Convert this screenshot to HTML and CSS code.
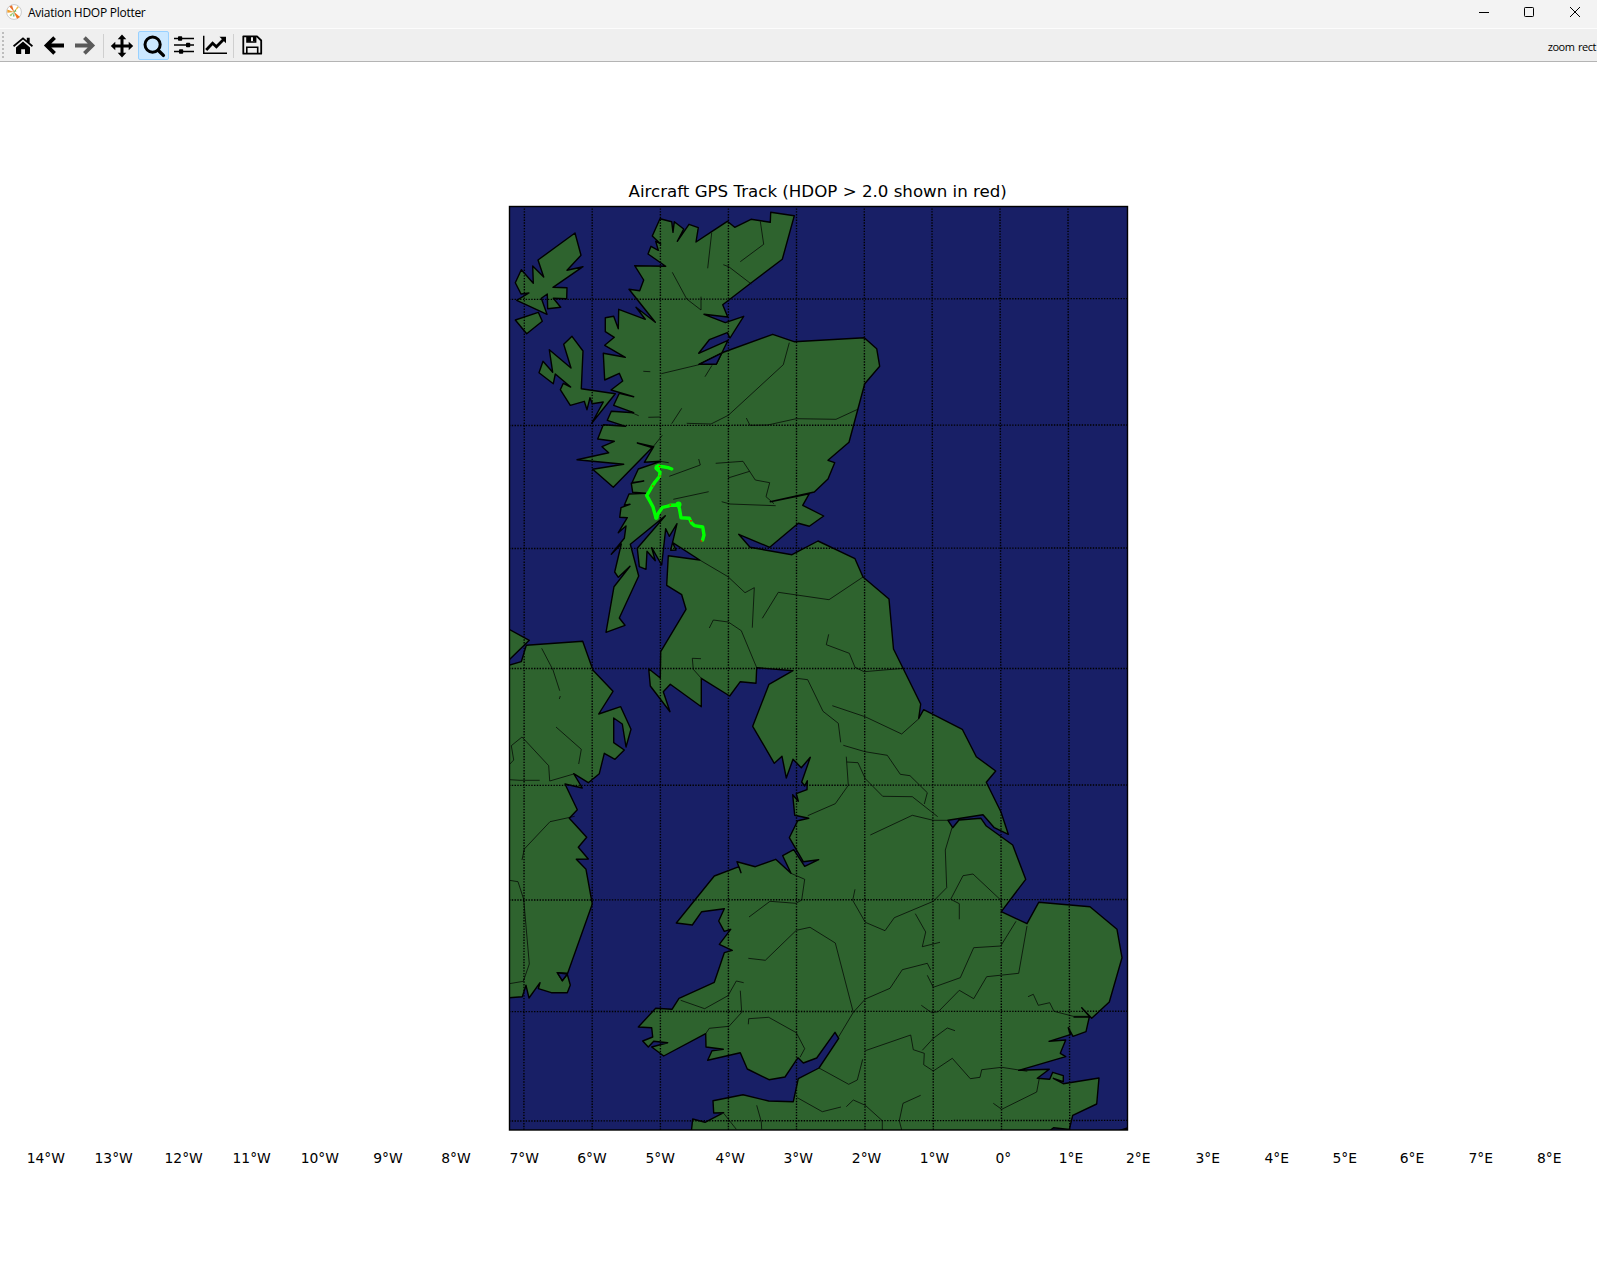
FILE: index.html
```html
<!DOCTYPE html>
<html lang="en">
<head>
<meta charset="utf-8">
<title>Aviation HDOP Plotter</title>
<link rel="stylesheet" href="styles.css">
</head>
<body>
<div class="window">
  <header class="titlebar">
    <svg class="app-icon" viewBox="0 0 16 16"><circle cx="8" cy="8" r="7.4" fill="#fff" stroke="#c4c4c4" stroke-width=".9"/><path d="M8.4 8.4L6 1.2L3.4 2.6Z" fill="#e8702a"/><path d="M8 8L1.2 5.4L1.4 8.8Z" fill="#f0a030"/><path d="M8 8L11.4 2.2L12.8 3.6Z" fill="#edbb4a"/><path d="M7.6 7.6L14 13L11 14.8Z" fill="#f2751c"/><path d="M8 8L3.4 11.1L5 12.6Z" fill="#a3c96b"/><path d="M8 7.4L6.8 12.4L8.6 12.4Z" fill="#6fb98a"/><path d="M7.4 8L9.5 5.4L10.4 7.5Z" fill="#68b04a"/></svg>
    <span class="title">Aviation HDOP Plotter</span>
    <div class="controls">
      <svg viewBox="0 0 12 12"><path d="M1 6.5H11"/></svg>
      <svg viewBox="0 0 12 12"><rect x="1.5" y="1.5" width="9" height="9" rx=".8"/></svg>
      <svg viewBox="0 0 12 12"><path d="M1 1L11 11M11 1L1 11"/></svg>
    </div>
  </header>
  <nav class="toolbar">
    <span class="handle"></span>
    <span class="tool"><svg viewBox="0 0 24 24"><path d="M12 7.6L19 13.4V19.2a.8.8 0 0 1-.8.8H14V15.3H10.2V20H5.8a.8.8 0 0 1-.8-.8V13.4Z"/><path d="M12 3.2L15.8 6.4V3.8H18.7V8.8L22 11.6L20.9 12.9L12 5.6L3.1 12.9L2 11.6L10.8 4.2Q12 3.2 12 3.2Z"/></svg></span>
    <span class="tool"><svg viewBox="0 0 24 24"><path class="arrow" d="M22 11.5H6M12.6 3.6L4.6 11.5L12.6 19.4"/></svg></span>
    <span class="tool disabled"><svg viewBox="0 0 24 24"><path class="arrow" d="M2 11.5H18M11.4 3.6L19.4 11.5L11.4 19.4"/></svg></span>
    <span class="separator"></span>
    <span class="tool shifted"><svg viewBox="0 0 24 24"><path d="M12 0.6L16.3 5.2H13.5V10.5H18.7V7.7L23.2 12L18.7 16.3V13.5H13.5V18.8H16.3L12 23.4L7.7 18.8H10.5V13.5H5.3V16.3L.8 12L5.3 7.7V10.5H10.5V5.2H7.7Z"/></svg></span>
    <span class="tool active"><svg viewBox="0 0 24 24"><circle cx="10.6" cy="10.6" r="7.6" fill="none" stroke="#000" stroke-width="3"/><path d="M16.2 16.2L21.4 21.4" stroke="#000" stroke-width="3.4" stroke-linecap="round"/></svg></span>
    <span class="tool shifted"><svg viewBox="0 0 24 24"><path d="M2 4.5H22M2 11H22M2 17.5H22" stroke="#000" stroke-width="1.6"/><rect x="6" y="2.2" width="4.2" height="4.6" rx=".8"/><rect x="14" y="8.7" width="4.2" height="4.6" rx=".8"/><rect x="7" y="15.2" width="4.2" height="4.6" rx=".8"/></svg></span>
    <span class="tool shifted"><svg viewBox="0 0 24 24"><path d="M.7 1.8V19.3H24" fill="none" stroke="#000" stroke-width="1.5"/><path d="M3.2 16L9.6 9.3L13.4 12.8L20.5 5.6" fill="none" stroke="#000" stroke-width="2.8"/><path d="M16.5 2.8H23V9.3Z"/></svg></span>
    <span class="separator narrow"></span>
    <span class="tool"><svg viewBox="0 0 24 24"><path d="M3.3 2.3H17L21.2 6.5V19.7H3.3Z" fill="none" stroke="#000" stroke-width="1.8" stroke-linejoin="round"/><path d="M7 2V8H15.6V2M6.8 20V13.3H17.7V20" fill="none" stroke="#000" stroke-width="1.6"/><rect x="7" y="2.2" width="4" height="5.6"/><rect x="13" y="2.2" width="2.6" height="5"/></svg></span>
    <span class="mode">zoom rect</span>
  </nav>
  <main class="figure">
    <svg class="plot" viewBox="0 62 1597 1199" width="1597" height="1199">
      <defs><clipPath id="frame"><rect x="509.5" y="206.5" width="618" height="923.5"/></clipPath></defs>
      <text class="plot-title" x="817.7" y="197.3">Aircraft GPS Track (HDOP &gt; 2.0 shown in red)</text>
      <rect class="sea" x="509.5" y="206.5" width="618" height="923.5"/>
      <g clip-path="url(#frame)">
        <g class="land">
          <path d="M660 218.7L671.7 221.7 673 232.3 674.3 221.7 683.7 229 677.3 241.3 689 224.3 698.3 227.7 696 242 711.7 231.7 727.3 221.3 734.7 227.3 751 219.3 770.3 222.3 770.7 212.3 794.3 215.7 782.3 259.3 751.3 282.7 722.7 304.7 727.7 317 704 314.3 725.3 322.7 743.7 316.3 730 338 727.3 332.7 709.3 339.7 698.7 353.3 728 340.3 716.3 364.3 699 364.3 724 352 772.7 334.3 794 341.7 864.3 337.7 876.7 348.7 879.7 366.3 864.7 383.7 849 442.3 828 460.3 834.7 462.7 828 479 814.3 492 770.3 501.7 809.3 493.7 802.7 505.3 823.7 516 809.3 526.3 798.3 523.3 769.7 547.3 738.7 534.3 750 547.3 792 554.7 818 541 855 558.7 863 577 889 599 893.5 649 920.7 704 918.7 718.3 923.7 709.7 962.3 729.3 976.3 756.7 995.7 771 986.3 782.3 1001 812 1008.3 834.3 994.3 827.7 983 814.7 948 820.3 952.7 827.7 959 820 981 818.3 986 825.7 1012.7 845 1025.7 879.3 1001.3 911.7 1027 923.7 1038.7 902.3 1090 906.7 1117 929.3 1122 957.7 1109.3 1002 1091.7 1018.3 1081.7 1007.7 1090 1017 1074 1017 1089.3 1017 1086 1031.7 1073 1036.3 1068.3 1027.7 1070.3 1034.7 1049 1041.3 1065.7 1040 1060.3 1053.3 1065.7 1056.7 1018.7 1070.3 1049.3 1069.3 1037.3 1078.3 1049.7 1079.3 1052.7 1072.3 1063.3 1075.7 1063.3 1081.7 1053.3 1078.3 1063.3 1083.7 1099 1078 1096.7 1104 1072.7 1115.3 1069.3 1129.5 1053.5 1127.8 1048 1132 691.3 1132 692.7 1119 705 1122.3 723.7 1112.7 713.7 1113 713 1100.7 743 1094.7 768.7 1101 793.3 1101.7 798.3 1078.7 819 1068 838.7 1038.3 835 1032.3 816.7 1058 803.3 1063 798 1057.7 785 1077 769 1079.7 747.3 1069 740.3 1052.7 707.7 1060.3 712 1050.7 723.3 1049.3 706 1047 705.7 1033.7 663.7 1056 651.7 1047 667.7 1042.7 653.7 1041.3 648.3 1047 642.7 1041 652.7 1037 651.7 1027.7 638.3 1027 655.7 1008.3 672 1009.3 679 998.3 714.3 982.3 724.3 952.7 732.3 950.3 719.3 944.3 730.7 929.3 724.3 931.3 718.7 921 724.3 908.7 701.7 911.7 692.3 925 676.3 923 714.3 876 739 866.7 741 872.7 737 861.7 755.3 866.7 775.7 859.3 791 873.3 782.7 855.7 793.7 849.7 804.7 866.3 818.7 859.7 803.3 861.7 789.3 837.7 797.7 820.7 808.7 818.3 794.7 815.3 792.7 794.7 798.3 801.3 796.3 793.7 807 789.7 807.3 780.7 804.7 786 801.7 782 810.3 757.3 801.3 767.7 793 759.3 786.3 778 782 756.3 774.3 763.3 752.7 726.3 769 684.3 793 670.7 756.7 667.7 756 683.3 740.3 681.7 729.7 696 701.3 678.3 701.3 706.7 670.3 684.3 663.3 691.7 670 711.7 650.3 686 648.7 668.7 660.3 678 660.7 651.7 686 609.3 681.7 594.7 666.7 585.3 668.3 555.7 699.7 560 672.7 542.7 676 550 670.7 550.3 677 523.7 669.3 536.3 665.7 528.7 661.7 565 651.7 547.7 655.3 560.7 647 551.3 646 569.3 639.3 566.7 637.3 548.3 665.3 515.7 630.3 544.3 638.7 576 619.3 618 625 625.3 606 632.3 614 586.7 630 566.3 618.3 577.3 614.7 572 621.3 544 611.3 554.3 624.3 538.3 626 526 618.3 532.7 627.3 517.7 619.7 517.3 621 507.7 630 504.3 624.3 505.3 629 494 645.7 493.3 632.7 492.3 631.3 483.3 643.7 481 632 482.7 638.3 469 660.7 461.3 644.3 462.3 653.7 446.7 637.3 443 652 447.7 613.3 487.3 592.7 469.3 623.7 464.3 577 459.7 608.7 452.7 602 446.7 614.3 441.3 597.7 439 603.3 424.7 625.7 426.3 607.3 420.3 611.3 411.3 633.7 412.7 613.7 405.3 619.3 393.3 633.7 396.7 611 390 622.7 381 619.3 373.3 604.7 380 603.3 353.3 625.3 357.3 604.7 345.3 614.3 337.3 605.3 331.7 605.3 317.7 613.7 316.3 618.3 328.7 618.7 309.3 645.3 319.3 636 307.3 655.3 322.3 629 289.3 639.7 290.7 643.7 280 634.7 265.7 665.7 266.3 648 254 651 246.3 658.3 250.3 655.7 241.3 660.7 244 652.3 236Z"/>
          <path d="M575 233L581 255.3 567 270.3 583 266.7 553 287.3 567 287.7 566.7 298.7 553.3 298.3 560.7 307.3 547.7 308.7 547.3 294 541.3 298.3 547 314.3 516.7 300.3 529 293 521 294 515.3 282.7 521.3 269.7 533.3 283.3 532.7 266 543.7 277 538 260Z"/>
          <path d="M515.3 320L538.3 312.3 542.3 321.3 526.7 333.7Z"/>
          <path d="M572 336.3L583 351 581.3 388.7 615.3 393.7 591.7 423.3 603.3 402 592.3 403.7 590 397.7 587 409.7 584.3 401.3 570.3 405.3 560.3 389.7 563.3 383.3 570.7 387 555.3 374 553.3 383.7 539 372.7 543 361.3 552.7 372.3 549.3 349.7 571 368 563.7 344.3Z"/>
          <path d="M505 627L529.3 640.3 505 664Z"/>
          <path d="M505 666.5L521.3 661.7 526.3 645.3 582.7 641.3 593 670.3 613 691.3 598.7 714 620.7 706.7 631 729.3 626 747 622.3 724 613.7 718 613.7 742.7 624.3 750 615 759.3 604.3 753.3 599.3 773.7 588.3 782.7 573.7 773.7 582.3 788 565 784 577.3 809.7 569.3 818.3 586.7 837.3 578.3 847.3 588.3 859 576.3 859.3 586 869.3 592.3 904 567.3 974.3 562.3 980.7 557.3 972.7 567 973.3 570.3 985 567.3 992.7 551.3 992.7 538.3 988.7 540 982.7 529 998 526 985.3 522.3 996.7 505 998Z"/>
          <path d="M1118 1131L1127.5 1128V1134H1116Z"/>
          <path class="inlet" d="M721.7 353.2L716.3 364.3H699Z"/>
          <path class="inlet" d="M567.3 974L562.3 980.7 557.3 972.7Z"/>
        </g>
        <path class="rivers" d="M711.7 232.7L707.7 268.3M760.3 221.3L763.7 244.3 740.3 261.7M723.3 264.7L728.7 266.7 751.3 284M672.3 272.3L686.7 299 701 310V296.7M643.3 371.3L650.3 371.7M661.3 373.7L699 364.7M705 376.7L712 365.3M789.3 342.7L783.3 364.7 728.3 415.3 711 424 686.7 423.3M681.7 408.3L671.7 423.7M648.3 417.3L660.7 417M631.7 412.7L638.7 415.7M746.3 418L750 425.3 767.7 425 796.3 418.7 836 419.3 858.3 409M662.3 435.3L653.7 446M660 461.3L668.7 462.7M669.3 476.3L700.3 465 698.7 459M673.3 499.3L708.7 491.7M715.7 463.3L743 461.3 755.3 480 769.7 482.7 766 496.7 774 503.7M728 478L749.7 471.3M721.7 501.7L730 504 775.7 505.7M699.7 560L728 576.7 745 592.7 754.3 587.7 752.3 627.7M762.3 618.3L778.3 592.3 829 599.7 863 577M709.3 628L713.3 620 728.3 622 741.3 630.7 756.7 667.7M828.7 634.3L826.3 644.7 849.3 653.3 855 667.3 864 671.7 904 668.3M701 658.7L692.3 658.3 693.3 669.3 701.3 678.3M541.7 648.3L553 670 559.7 690.7M560.3 696L559.3 699M556 727L581.3 749.3 578.7 764M509.3 764.7L513.7 760 511.3 745.7 522 737 548.7 765.7 549.7 781 573.7 774M509.3 779.7L520 780.3H539.7M574.7 816.3L550 821.7 524.3 849 522 860M509.3 880.3L518 881.7 523.7 899.3 529.3 964 523.3 981.3 509.3 983.7M796.7 678.3L807.7 679.7 823 711.3 838.3 723.3 840.7 742.3M832.3 705.7L865 716.7 901.7 734 919.3 718.3M843.3 745.3L865 751.7 887.3 755.3 900.3 774.3 910 775.7 927.3 792.7 924.3 804M846.3 756.7L848.3 785.3 835.3 803.7 807.7 815.7M846.7 762L858 762.7 865.3 778.7 882.7 796.3 912.3 796.7 937.7 816.7M870.3 835L912.3 815.3 933.3 820.3H948M952 827.7L945.3 850 946.7 887.7 933.3 901.3 894.3 917.7 885 930.7 865.3 922.3 852.7 900.3 855 889.3M1002 908L1000.7 900 973 874 963 875.7 950.7 899.3 959.3 903.7V919.3M791 873.3L804.7 879.3 801.7 900 796 903.3 770 901.3 749 917M748.3 958.3L765.3 960.3 796.3 930.3 810 927.3 835.3 943 853.3 1012.3M838.7 1036.7L853.3 1012.3 865.3 999 890 988.3 902.3 969.7 927.3 963.3 930.7 970M915.3 913.7L925.7 932 922.3 946.7 940 942.3M927.3 975.3L933.3 987.3 960.3 977.7 973.7 947.7 1000.7 946 1016 921.3M921.3 1005.3L931.7 1012.7 938.3 1011.7 959.3 990.3 973.7 998.7 986.7 976.7 1018.7 973.3 1027 926M1028 996.7L1033.3 994.3 1038.3 1005.3 1049.7 1002.7 1054 1011.3 1073.3 1016.3H1088.3M865.3 1050.7L910.7 1035 913.3 1049.7 924.3 1053.3 923.7 1064.7 933.3 1071 952.3 1058.3 970.3 1078.7 980 1077.3 981.7 1069.7 1001.7 1067.3 1027.3 1071.3M922.3 1050.3L933.3 1038.3 947.3 1028 955 1030.7M819 1068L848.7 1084.3 857.3 1080 862.7 1059.3M797.3 1097.7L822.3 1111.7 841 1107M846.3 1106.7L853.3 1100 865.3 1105.3 882.3 1120.7V1130M920.7 1095.3L903 1103.3 899.3 1120.7 901.7 1130M993.3 1103.3L1001.7 1109.3 1036.7 1092 1039.3 1078.3M680.7 1000.3L704.7 1008.7 728 995.7 736.3 981 743.7 982.7M740.3 990.7L741.7 1012.3 729 1026.3 709.3 1028.3 705.7 1033.7M748.3 1024.3L748.7 1018.7 768.7 1017.3 796.3 1032.7 804.7 1048.7 800 1057.3M723.7 1113.3L736.3 1129.3M756.7 1105.3L761.3 1121.7 761.7 1129.3"/>
        <path class="graticule" d="M523.9 1130L524.4 206M592.2 1130V206M660.4 1130V206M728.4 1130V206M796.5 1130V206M865 1130L864.3 206M933.3 1130L932 206M1001.5 1130L1000 206M1069.7 1130L1068 206M509 299.4L1128 298.6M509 425.5L1128 425M509 548.5L1128 548M509 668.5H1128M509 785.4L1128 785M509 900L1128 899.5M509 1011.6L1128 1011.3M509 1121L1128 1120.4"/>
        <path class="track" d="M671.7 469L668 467.6 663.3 466.8 658.3 465.8 656.3 468.6 660 472 659.5 476.5 655 482 652 486.5 649.5 491 646.7 495.7 649 499.5 653 507 656 518 658.5 513 662.5 507.3 668 506.2 670 505.3 678.3 505 679.5 509 681 517.8 689.3 518.3 691.5 523 694.3 525.6 702.7 527 704 535 702.6 540"/>
        <circle class="fix" cx="678.5" cy="504.5" r="3"/>
        <circle class="fix" cx="657.3" cy="467.6" r="2.8"/>
        <circle class="fix" cx="656.5" cy="517.5" r="2.2"/>
        <path class="poor" d="M659 466.5h1.4M659.3 476h1.4M652 486h1.6M669.5 505h1.6M690 520.8h2M700.4 541h2"/>
      </g>
      <rect class="frame" x="509.5" y="206.5" width="618" height="923.5"/>
      <g class="labels">
        <text x="45.8" y="1163">14°W</text><text x="113.7" y="1163">13°W</text><text x="183.7" y="1163">12°W</text><text x="251.7" y="1163">11°W</text><text x="319.8" y="1163">10°W</text><text x="388" y="1163">9°W</text><text x="456" y="1163">8°W</text><text x="524.2" y="1163">7°W</text><text x="592" y="1163">6°W</text><text x="660.2" y="1163">5°W</text><text x="730.3" y="1163">4°W</text><text x="798.3" y="1163">3°W</text><text x="866.6" y="1163">2°W</text><text x="934.4" y="1163">1°W</text><text x="1003.3" y="1163">0°</text><text x="1071" y="1163">1°E</text><text x="1138.3" y="1163">2°E</text><text x="1207.7" y="1163">3°E</text><text x="1276.7" y="1163">4°E</text><text x="1344.7" y="1163">5°E</text><text x="1412" y="1163">6°E</text><text x="1480.7" y="1163">7°E</text><text x="1549.3" y="1163">8°E</text>
      </g>
    </svg>
  </main>
</div>
</body>
</html>
```
FILE: styles.css
```css
body { margin: 0; background: #fff; color: #000; }
.window { width: 1597px; height: 1261px; display: flex; flex-direction: column; overflow: hidden; }
.titlebar { height: 29px; box-sizing: border-box; padding: 0 0 4px 6px; display: flex; align-items: center; background: #f3f3f3; border-bottom: 1px solid #fcfcfc; }
.app-icon { width: 16px; height: 16px; }
.title { margin-left: 6px; font: 12px/16px "Open Sans", "Noto Sans", sans-serif; letter-spacing: -0.27px; white-space: nowrap; padding-top: 1px; }
.controls { margin-left: auto; display: flex; padding-right: 16px; }
.controls svg { width: 12px; height: 12px; fill: none; stroke: #000; stroke-width: 1; margin-left: 34px; }
.controls svg:nth-child(2) { margin-left: 33px; }
.toolbar { height: 33px; box-sizing: border-box; padding-top: 1px; display: flex; align-items: center; background: #efefef; border-bottom: 1px solid #b4b4b4; }
.handle { width: 4px; height: 27px; margin-right: 3px; box-sizing: border-box; background: repeating-linear-gradient(to bottom, #bdbdbd 0 2px, transparent 2px 4px) right / 2px 100% no-repeat; }
.tool { width: 31px; height: 29px; box-sizing: border-box; display: flex; align-items: center; justify-content: center; border: 1px solid transparent; border-radius: 2px; }
.tool svg { width: 24px; height: 24px; flex: none; }
.tool.active { background: #cce8ff; border-color: #99d1ff; }
.tool.disabled { opacity: 0.62; }
.tool.shifted { padding-right: 2px; }
.tool.shifted svg { margin-top: 1px; }
.arrow { fill: none; stroke: #000; stroke-width: 3.8; }
.separator { width: 7px; height: 24px; background: linear-gradient(#cfcfcf, #cfcfcf) center / 1px 100% no-repeat; }
.separator.narrow { width: 5px; }
.mode { margin-left: auto; padding: 1px 1px 0 0; font: 11px "Open Sans", "Noto Sans", sans-serif; letter-spacing: -0.45px; word-spacing: 1px; white-space: nowrap; }
.figure { flex: 1; min-height: 0; }
.plot { display: block; }
.plot-title { font: 16.67px "DejaVu Sans", sans-serif; text-anchor: middle; }
.labels { font: 13.89px "DejaVu Sans", sans-serif; text-anchor: middle; }
.sea { fill: #181f66; }
.land { fill: #2e632e; stroke: #000; stroke-width: 1.4; stroke-linejoin: round; }
.inlet { fill: #181f66; }
.rivers { fill: none; stroke: #000; stroke-width: 0.7; }
.graticule { fill: none; stroke: #000; stroke-width: 1.39; stroke-dasharray: 1.39 1.39; }
.track { fill: none; stroke: #0f0; stroke-width: 3.4; stroke-linejoin: round; stroke-linecap: round; }
.fix { fill: #0f0; }
.poor { stroke: #f00; stroke-width: 1.2; }
.frame { fill: none; stroke: #000; stroke-width: 1.4; }
```
